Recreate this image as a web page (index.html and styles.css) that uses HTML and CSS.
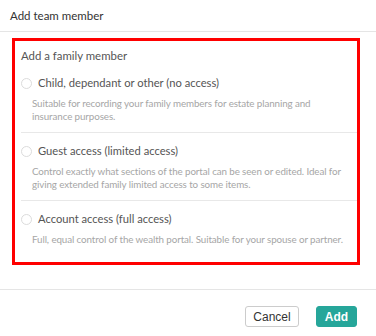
FILE: index.html
```html
<!DOCTYPE html>
<html lang="en">
<head>
    <meta charset="UTF-8">
    <title>Add team member</title>
    <link rel="stylesheet" href="styles.css">
</head>
<body>
    <div class="modal">
        <div class="modal-header">Add team member</div>

        <div class="modal-body">
            <div class="choice-box">
                <div class="choice-title">Add a family member</div>
                <ul class="choice-list">
                    <li class="choice-item">
                        <label class="choice-label"><span class="radio"></span>Child, dependant or other (no access)</label>
                        <p class="choice-desc">Suitable for recording your family members for estate planning and insurance purposes.</p>
                    </li>
                    <li class="choice-item">
                        <label class="choice-label"><span class="radio"></span>Guest access (limited access)</label>
                        <p class="choice-desc">Control exactly what sections of the portal can be seen or edited. Ideal for giving extended family limited access to some items.</p>
                    </li>
                    <li class="choice-item">
                        <label class="choice-label"><span class="radio"></span>Account access (full access)</label>
                        <p class="choice-desc">Full, equal control of the wealth portal. Suitable for your spouse or partner.</p>
                    </li>
                </ul>
            </div>
        </div>

        <div class="modal-footer">
            <button class="btn btn-default">Cancel</button>
            <button class="btn btn-primary">Add</button>
        </div>
    </div>
</body>
</html>
```

FILE: styles.css
```css
body{
    margin: 0;
    background: #fff;
    font-family: "Lato", "Open Sans", sans-serif;
}
ul, li, p{
    list-style: none;
    padding: 0;
    margin: 0;
}
.modal{
    width: 376px;
    height: 336px;
    display: flex;
    flex-direction: column;
}
.modal-header{
    height: 31px;
    line-height: 31px;
    padding-left: 10px;
    font-size: 11.5px;
    color: #333;
    border-bottom: 1px solid #e5e5e5;
}
.modal-body{
    padding: 6px 16px 0 12px;
}
.choice-box{
    border: 3px solid #ff0000;
    padding: 6px 0 7px 6px;
}
.choice-title{
    line-height: 18px;
    font-size: 11.4px;
    color: #555;
}
.choice-item{
    padding: 9px 0 9px;
    border-bottom: 1px solid #e8e8e8;
}
.choice-item:last-child{
    border-bottom: none;
}
.choice-label{
    display: flex;
    align-items: center;
    gap: 6px;
    line-height: 18px;
    font-size: 11.2px;
    color: #555;
}
.radio{
    width: 9px;
    height: 9px;
    border: 1px solid #dcdcdc;
    border-radius: 50%;
    background: #fff;
}
.choice-desc{
    margin-top: 5px;
    padding-left: 11px;
    padding-right: 4px;
    font-size: 9.8px;
    letter-spacing: -0.1px;
    line-height: 13px;
    color: #a6a6a6;
}
.modal-footer{
    margin-top: 24px;
    border-top: 1px solid #e5e5e5;
    padding: 16px 19px 0 0;
    display: flex;
    justify-content: flex-end;
    gap: 17px;
}
.btn{
    height: 21px;
    padding: 0;
    border-radius: 3px;
    font-family: "Liberation Sans", Arial, sans-serif;
    font-size: 12px;
    cursor: pointer;
}
.btn-default{
    width: 54px;
    border: 1px solid #ccc;
    background: #fff;
    color: #333;
}
.btn-primary{
    width: 41px;
    border: 1px solid #26a69a;
    background: #26a69a;
    color: #fff;
    font-weight: bold;
}
```
